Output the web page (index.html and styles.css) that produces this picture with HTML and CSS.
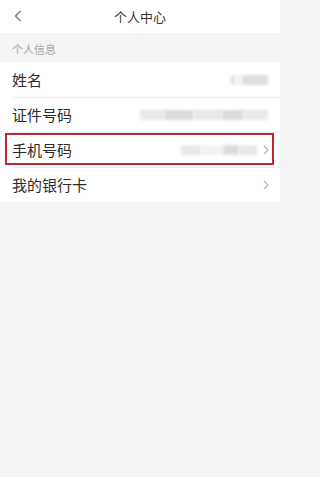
FILE: index.html
```html
<!DOCTYPE html>
<html lang="zh-CN">
<head>
<meta charset="utf-8">
<title>个人中心</title>
<link rel="stylesheet" href="styles.css">
</head>
<body>
<div class="page">
  <header class="topbar">
    <span class="back">
      <svg width="8" height="12" viewBox="0 0 8 12"><path d="M6.5 1 L1.5 6 L6.5 11" fill="none" stroke="#777" stroke-width="1.3"/></svg>
    </span>
    <h1 class="title">个人中心</h1>
  </header>
  <div class="section-label">个人信息</div>
  <ul class="list">
    <li class="row">
      <span class="label">姓名</span>
      <span class="value">
        <span class="blur b-a" style="width:6px"></span>
        <span class="blur b-c" style="width:6px"></span>
        <span class="blur b-b" style="width:26px"></span>
      </span>
    </li>
    <li class="row">
      <span class="label">证件号码</span>
      <span class="value">
        <span class="blur b-a" style="width:24px"></span>
        <span class="blur b-b" style="width:30px"></span>
        <span class="blur b-a" style="width:28px"></span>
        <span class="blur b-b" style="width:22px"></span>
        <span class="blur b-a" style="width:24px"></span>
      </span>
    </li>
    <li class="row row-hl">
      <span class="label">手机号码</span>
      <span class="value">
        <span class="blur b-a" style="width:20px"></span>
        <span class="blur b-c" style="width:22px"></span>
        <span class="blur b-b" style="width:16px"></span>
        <span class="blur b-a" style="width:18px"></span>
      </span>
      <span class="chev"><svg width="6" height="10" viewBox="0 0 6 10"><path d="M1 1 L5 5 L1 9" fill="none" stroke="#b5b5b5" stroke-width="1.2"/></svg></span>
    </li>
    <li class="row">
      <span class="label">我的银行卡</span>
      <span class="value"></span>
      <span class="chev"><svg width="6" height="10" viewBox="0 0 6 10"><path d="M1 1 L5 5 L1 9" fill="none" stroke="#b5b5b5" stroke-width="1.2"/></svg></span>
    </li>
  </ul>
</div>
</body>
</html>
```
FILE: styles.css
```css
* { box-sizing: border-box; }
html { background: #f4f4f4; }
html, body { margin: 0; padding: 0; }
body {
  background: #f4f4f4;
  font-family: "Noto Sans CJK SC", "Noto Sans", sans-serif;
  color: #333;
}
.page { width: 280px; min-height: 477px; background: #f4f4f4; }
.topbar {
  height: 33px;
  background: #fff;
  display: flex;
  align-items: center;
  justify-content: center;
  position: relative;
}
.back {
  position: absolute;
  left: 14px;
  top: 10px;
  display: flex;
}
.title {
  margin: 0;
  font-size: 13px;
  font-weight: normal;
  color: #333;
  line-height: 1;
}
.section-label {
  height: 29px;
  display: flex;
  align-items: center;
  padding-left: 12px;
  padding-top: 3px;
  font-size: 11px;
  color: #a6a6a6;
}
.list {
  list-style: none;
  margin: 0;
  padding: 0;
  background: #fff;
}
.row {
  position: relative;
  height: 35px;
  display: flex;
  align-items: center;
  padding: 0 12px 0 12px;
}
.row + .row::before {
  content: "";
  position: absolute;
  left: 12px;
  right: 0;
  top: 0;
  height: 1px;
  background: #eeeeee;
}
.label {
  font-size: 15px;
  color: #2b2b2b;
  flex: 1;
  line-height: 1;
}
.value {
  display: flex;
  align-items: center;
  height: 10px;
}
.blur {
  display: block;
  height: 10px;
  filter: blur(1.5px);
}
.b-a { background: #e8e8e8; }
.b-b { background: #dcdcdc; }
.b-c { background: #f2f2f2; }
.chev {
  display: flex;
  margin-left: 6px;
  margin-right: -1px;
}
.row-hl::after {
  content: "";
  position: absolute;
  left: 5px;
  right: 6px;
  top: 1px;
  bottom: 2px;
  border: 2px solid #c0262d;
  pointer-events: none;
}
```
